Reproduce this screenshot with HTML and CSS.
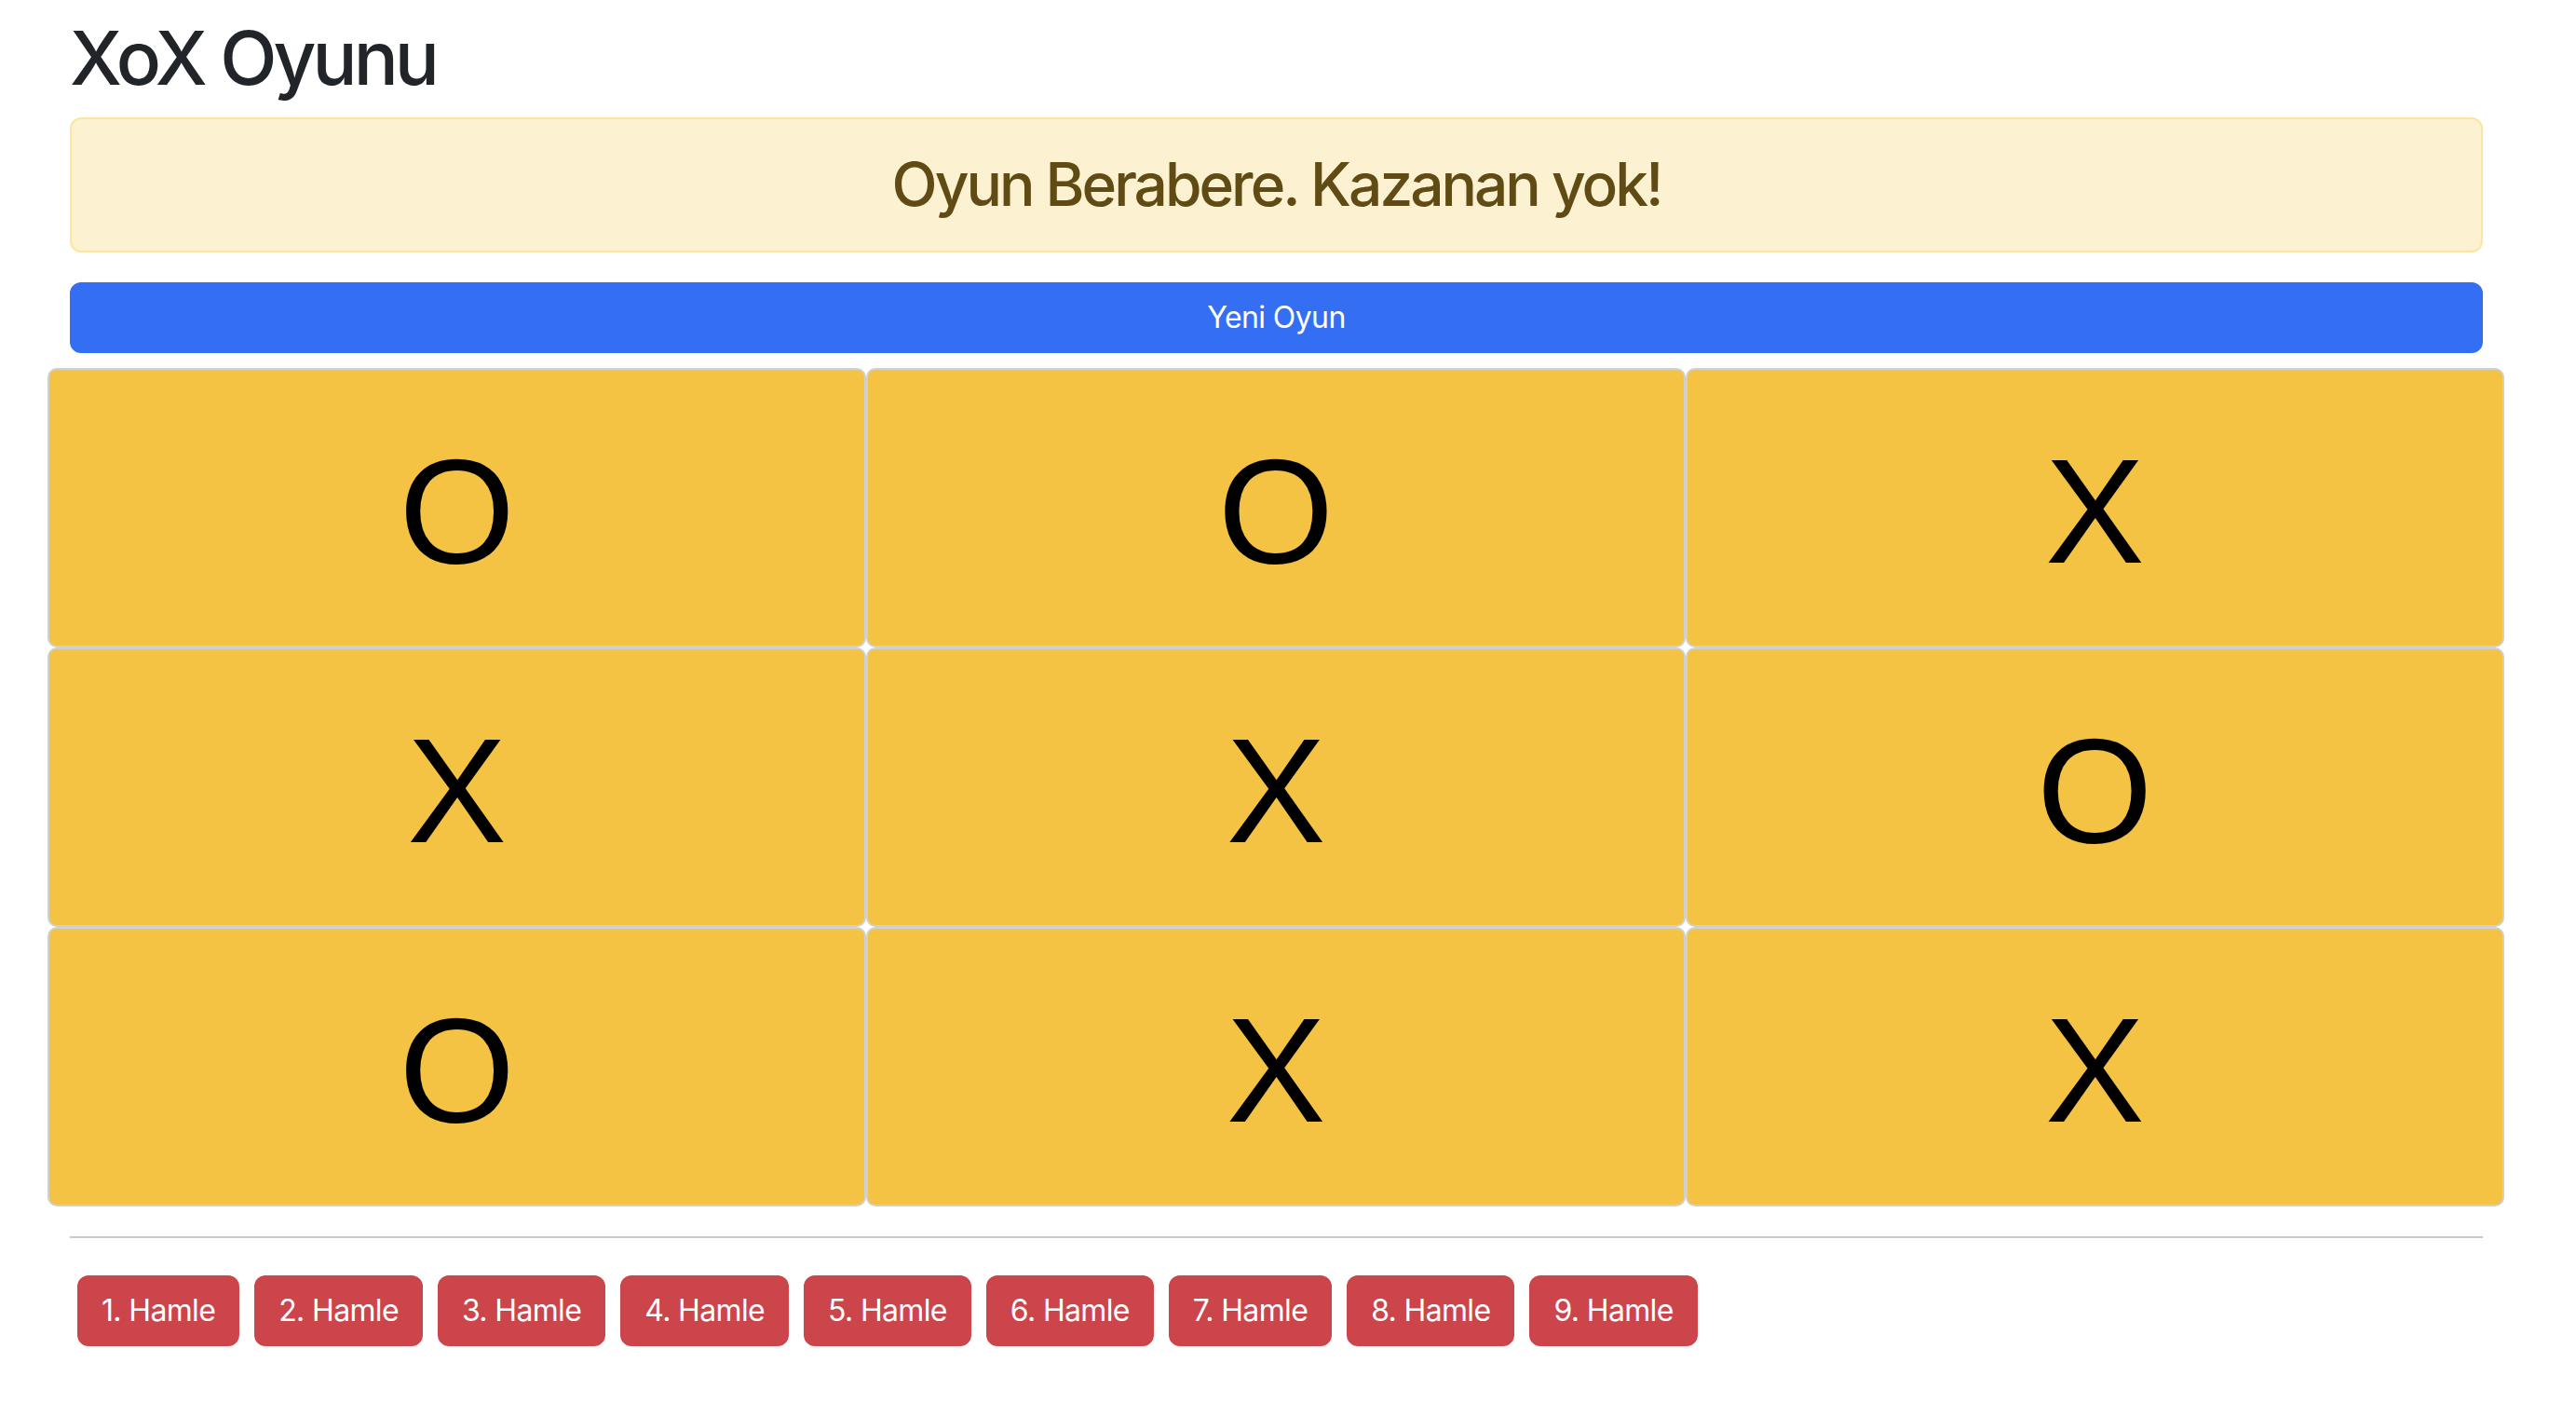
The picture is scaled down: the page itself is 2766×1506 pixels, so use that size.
FILE: index.html
```html
<!DOCTYPE html>
<html lang="tr">
<head>
<meta charset="utf-8">
<title>XoX Oyunu</title>
<link rel="stylesheet" href="styles.css">
</head>
<body>
<div class="page">
  <h1 class="title">XoX Oyunu</h1>
  <div class="alert"><h2 class="alert-text">Oyun Berabere. Kazanan yok!</h2></div>
  <button class="new-game">Yeni Oyun</button>
  <div class="board">
    <div class="cell">O</div>
    <div class="cell">O</div>
    <div class="cell">X</div>
    <div class="cell">X</div>
    <div class="cell">X</div>
    <div class="cell">O</div>
    <div class="cell">O</div>
    <div class="cell">X</div>
    <div class="cell">X</div>
  </div>
  <hr class="divider">
  <div class="moves">
    <button class="move">1. Hamle</button>
    <button class="move">2. Hamle</button>
    <button class="move">3. Hamle</button>
    <button class="move">4. Hamle</button>
    <button class="move">5. Hamle</button>
    <button class="move">6. Hamle</button>
    <button class="move">7. Hamle</button>
    <button class="move">8. Hamle</button>
    <button class="move">9. Hamle</button>
  </div>
</div>
</body>
</html>
```

FILE: styles.css
```css
* { box-sizing: border-box; }

body {
  margin: 0;
  background: #ffffff;
  color: #212529;
  font-family: Inter, "Noto Sans", "Liberation Sans", sans-serif;
  font-size: 32px;
  line-height: 1.5;
}

.page {
  padding: 14px 100px 40px 75px;
}

.title {
  margin: 0 0 16px;
  font-size: 80px;
  font-weight: 500;
  line-height: 1.2;
  color: #212529;
  letter-spacing: -4px;
}

.alert {
  margin: 0 0 32px;
  padding: 32px;
  background: #fcf2d2;
  border: 2px solid #fbe59f;
  border-radius: 12px;
  text-align: center;
}

.alert-text {
  margin: 0;
  font-size: 64px;
  font-weight: 500;
  line-height: 1.2;
  color: #614b14;
  letter-spacing: -3px;
}

.new-game {
  display: block;
  width: 100%;
  margin: 0 0 16px;
  padding: 12px 24px;
  font-family: inherit;
  font-size: 32px;
  line-height: 48px;
  color: #ffffff;
  background: #346ff3;
  border: 2px solid #346ff3;
  border-radius: 12px;
  letter-spacing: -0.6px;
}

.board {
  display: grid;
  grid-template-columns: repeat(3, 1fr);
  grid-auto-rows: 300px;
  margin: 0 -23px 0 -24px;
}

.cell {
  display: flex;
  align-items: center;
  justify-content: center;
  padding-top: 8px;
  background: #f4c344;
  border: 2px solid #d0d0d0;
  border-radius: 10px;
  font-family: "Liberation Sans", Arial, sans-serif;
  font-size: 160px;
  line-height: 1;
  color: #000000;
}

.divider {
  margin: 32px 0;
  border: 0;
  border-top: 2px solid #c8c8c8;
}

.moves {
  display: flex;
  flex-wrap: wrap;
}

.move {
  margin: 8px;
  padding: 12px 24px;
  font-family: inherit;
  font-size: 32px;
  line-height: 48px;
  color: #ffffff;
  background: #cb454b;
  border: 2px solid #cb454b;
  border-radius: 12px;
  letter-spacing: -0.65px;
}
```
